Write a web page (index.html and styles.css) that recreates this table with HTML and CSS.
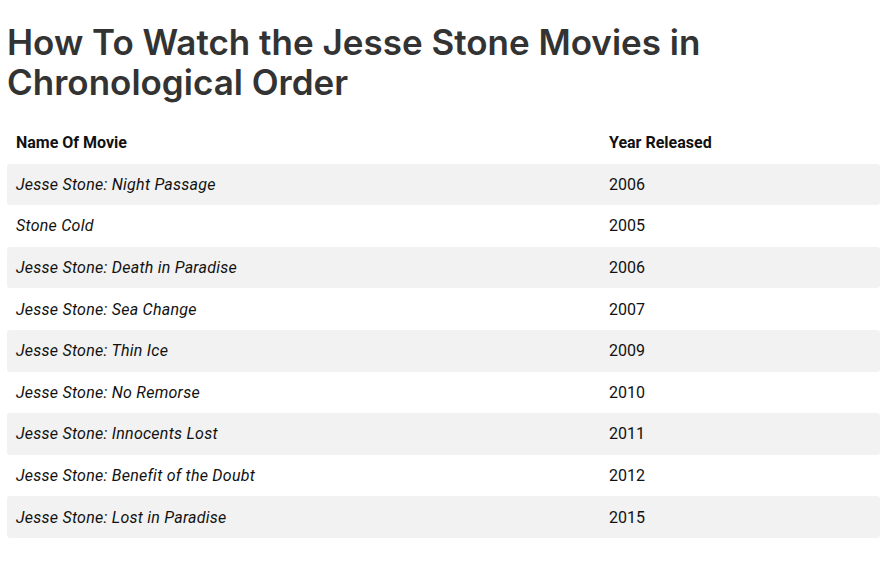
FILE: index.html
```html
<!DOCTYPE html>
<html>
<head>
<meta charset="utf-8">
<link rel="stylesheet" href="styles.css">
</head>
<body>
<main class="page">
  <h2 class="title">How To Watch the Jesse Stone Movies in Chronological Order</h2>
  <table class="movies">
    <thead>
      <tr><th class="col-name">Name Of Movie</th><th>Year Released</th></tr>
    </thead>
    <tbody>
      <tr><td><em>Jesse Stone: Night Passage</em></td><td>2006</td></tr>
      <tr><td><em>Stone Cold</em></td><td>2005</td></tr>
      <tr><td><em>Jesse Stone: Death in Paradise</em></td><td>2006</td></tr>
      <tr><td><em>Jesse Stone: Sea Change</em></td><td>2007</td></tr>
      <tr><td><em>Jesse Stone: Thin Ice</em></td><td>2009</td></tr>
      <tr><td><em>Jesse Stone: No Remorse</em></td><td>2010</td></tr>
      <tr><td><em>Jesse Stone: Innocents Lost</em></td><td>2011</td></tr>
      <tr><td><em>Jesse Stone: Benefit of the Doubt</em></td><td>2012</td></tr>
      <tr><td><em>Jesse Stone: Lost in Paradise</em></td><td>2015</td></tr>
    </tbody>
  </table>
</main>
</body>
</html>
```

FILE: styles.css
```css
html, body {
  margin: 0;
  padding: 0;
  background: #fff;
}
.page {
  padding: 22px 9px 0 7px;
}
.title {
  margin: 0 0 20px 0;
  font-family: Inter, "Open Sans", sans-serif;
  font-weight: 600;
  font-size: 35px;
  line-height: 40px;
  color: #333;
  letter-spacing: 0;
}
.movies {
  width: 100%;
  border-collapse: separate;
  border-spacing: 0;
  font-family: Roboto, "Liberation Sans", sans-serif;
  font-size: 16px;
  color: #111;
}
.movies th, .movies td {
  text-align: left;
  padding: 0 9px;
  height: 41.6px;
  vertical-align: middle;
}
.movies th {
  font-weight: 700;
}
.col-name {
  width: 575px;
}
.movies tbody tr:nth-child(odd) td {
  background: #f2f2f2;
}
.movies tbody tr:nth-child(odd) td:first-child {
  border-radius: 3px 0 0 3px;
}
.movies tbody tr:nth-child(odd) td:last-child {
  border-radius: 0 3px 3px 0;
}
.movies em {
  font-style: italic;
  letter-spacing: 0.25px;
}
```
